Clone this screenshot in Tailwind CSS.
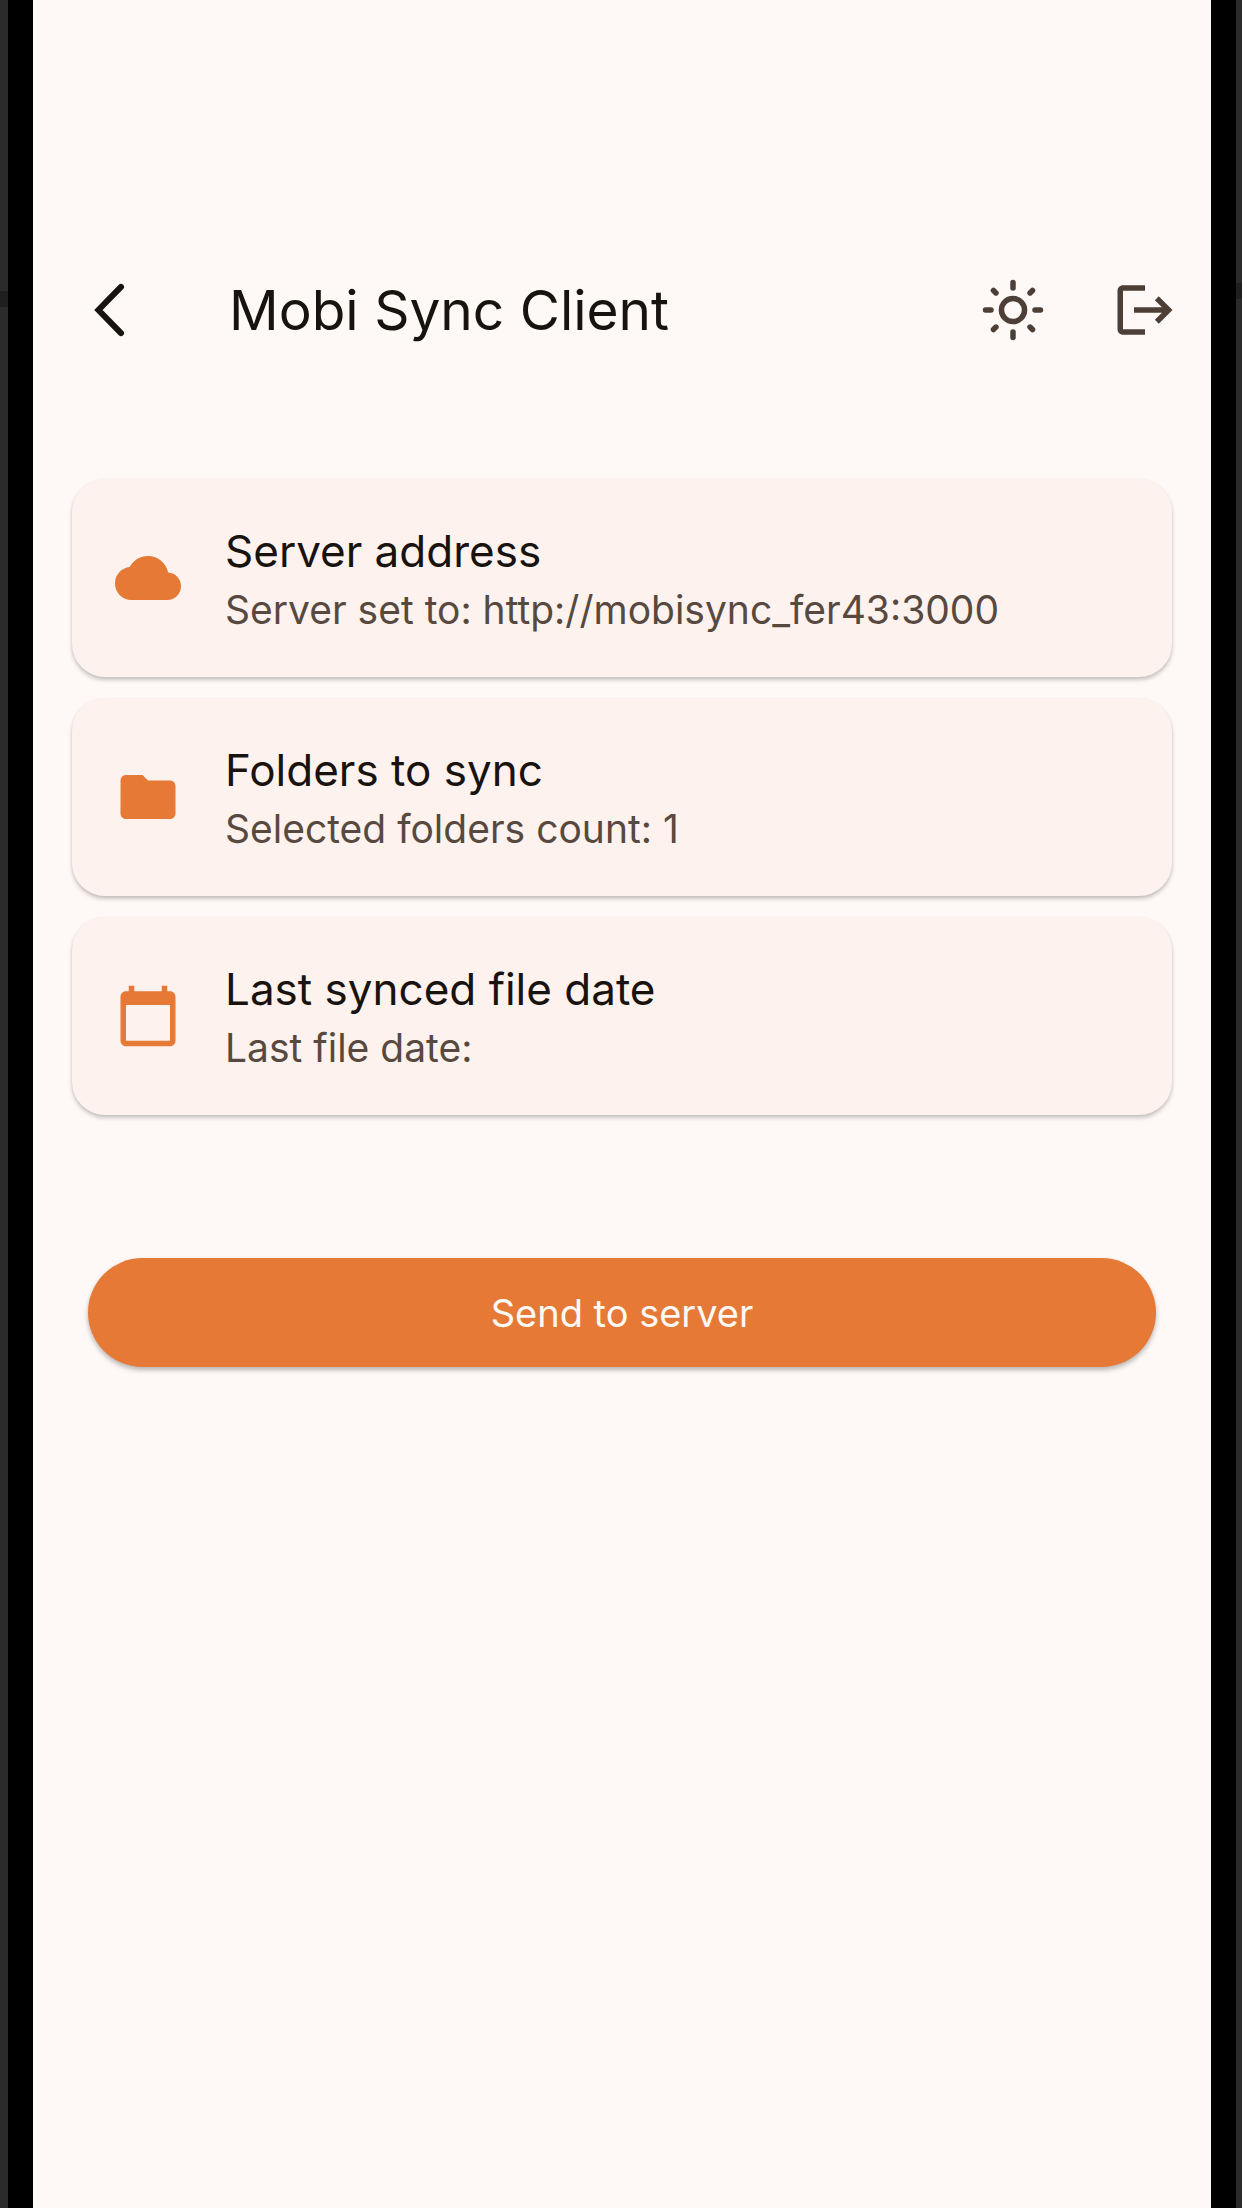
<!DOCTYPE html>
<html lang="en">
<head>
<meta charset="utf-8">
<meta name="viewport" content="width=device-width, initial-scale=1">
<title>Mobi Sync Client</title>
<script src="https://cdn.jsdelivr.net/npm/@tailwindcss/browser@4"></script>
</head>
<body class="min-h-screen bg-black font-['Inter',sans-serif]">
<div class="relative flex min-h-screen border-r-6 border-l-8 border-[#2b2b2b] px-[25px]">
  <!-- antenna bands on the phone frame -->
  <div class="absolute top-[291px] -left-2 h-4 w-2 bg-[#1f1f1f]"></div>
  <div class="absolute top-[283px] -right-[6px] h-4 w-[6px] bg-[#1f1f1f]"></div>
  <div class="flex min-w-0 flex-1 flex-col bg-[#fef9f6] pt-[232px]">
    <header class="flex h-[156px] items-center pr-[33px] pl-[44px]">
      <button type="button" aria-label="Back" class="mr-[86px]">
        <svg class="size-[66px]" viewBox="0 0 24 24" fill="none" stroke="#191310" stroke-width="2.2" stroke-linecap="round"><path d="M16 3.6 7.8 12l8.2 8.4"/></svg>
      </button>
      <h1 class="flex-1 text-[55px] leading-[72px] text-[#191310]">Mobi Sync Client</h1>
      <div class="flex gap-[66px]">
        <button type="button" aria-label="Toggle light mode">
          <svg class="size-[66px]" viewBox="0 0 24 24" fill="none" stroke="#4d3f38" stroke-width="2" stroke-linecap="round"><circle cx="12" cy="12" r="4.2"/><path d="M12 2v2M12 20v2M2 12h2M20 12h2M4.9 4.9l.9.9M18.2 18.2l.9.9M19.1 4.9l-.9.9M5.8 18.2l-.9.9"/></svg>
        </button>
        <button type="button" aria-label="Log out">
          <svg class="size-[66px]" viewBox="0 0 24 24" fill="#4d3f38"><path d="M17 7l-1.41 1.41L18.17 11H8v2h10.17l-2.58 2.58L17 17l5-5zM4 5h8V3H4c-1.1 0-2 .9-2 2v14c0 1.1.9 2 2 2h8v-2H4V5z"/></svg>
        </button>
      </div>
    </header>
    <main class="mt-[91px] flex flex-col px-[39px]">
      <ul class="flex flex-col gap-[21px]">
        <li>
          <button type="button" class="flex h-[198px] w-full items-center gap-[44px] rounded-[33px] bg-[#fdf2ed] px-[43px] text-left shadow-[0_3px_4px_rgba(0,0,0,0.2),0_1px_3px_rgba(0,0,0,0.06)]">
            <svg class="size-[66px] shrink-0" viewBox="0 0 24 24" fill="#e57935"><path d="M19.35 10.04C18.67 6.59 15.64 4 12 4 9.11 4 6.6 5.64 5.35 8.04 2.34 8.36 0 10.91 0 14c0 3.31 2.69 6 6 6h13c2.76 0 5-2.24 5-5 0-2.64-2.05-4.78-4.65-4.96z"/></svg>
            <span class="flex min-w-0 flex-col pt-[2px]">
              <span class="text-[44px] leading-[62px] text-[#191310]">Server address</span>
              <span class="text-[39px] leading-[56px] text-[#57493f]">Server set to: http://mobisync_fer43:3000</span>
            </span>
          </button>
        </li>
        <li>
          <button type="button" class="flex h-[198px] w-full items-center gap-[44px] rounded-[33px] bg-[#fdf2ed] px-[43px] text-left shadow-[0_3px_4px_rgba(0,0,0,0.2),0_1px_3px_rgba(0,0,0,0.06)]">
            <svg class="size-[66px] shrink-0" viewBox="0 0 24 24" fill="#e57935"><path d="M10 4H4c-1.1 0-1.99.9-1.99 2L2 18c0 1.1.9 2 2 2h16c1.1 0 2-.9 2-2V8c0-1.1-.9-2-2-2h-8l-2-2z"/></svg>
            <span class="flex min-w-0 flex-col pt-[2px]">
              <span class="text-[44px] leading-[62px] text-[#191310]">Folders to sync</span>
              <span class="text-[39px] leading-[56px] text-[#57493f]">Selected folders count: 1</span>
            </span>
          </button>
        </li>
        <li>
          <button type="button" class="flex h-[198px] w-full items-center gap-[44px] rounded-[33px] bg-[#fdf2ed] px-[43px] text-left shadow-[0_3px_4px_rgba(0,0,0,0.2),0_1px_3px_rgba(0,0,0,0.06)]">
            <svg class="size-[66px] shrink-0" viewBox="0 0 24 24" fill="#e57935"><path d="M20 3h-1V1h-2v2H7V1H5v2H4c-1.1 0-2 .9-2 2v16c0 1.1.9 2 2 2h16c1.1 0 2-.9 2-2V5c0-1.1-.9-2-2-2zm0 18H4V8h16v13z"/></svg>
            <span class="flex min-w-0 flex-col pt-[2px]">
              <span class="text-[44px] leading-[62px] text-[#191310]">Last synced file date</span>
              <span class="text-[39px] leading-[56px] text-[#57493f]">Last file date:</span>
            </span>
          </button>
        </li>
      </ul>
      <button type="button" class="mx-4 mt-[143px] h-[109px] rounded-full bg-[#e57935] text-[38px] leading-[56px] text-[#fef9f6] shadow-[0_3px_5px_rgba(0,0,0,0.28)]">Send to server</button>
    </main>
  </div>
</div>
</body>
</html>
